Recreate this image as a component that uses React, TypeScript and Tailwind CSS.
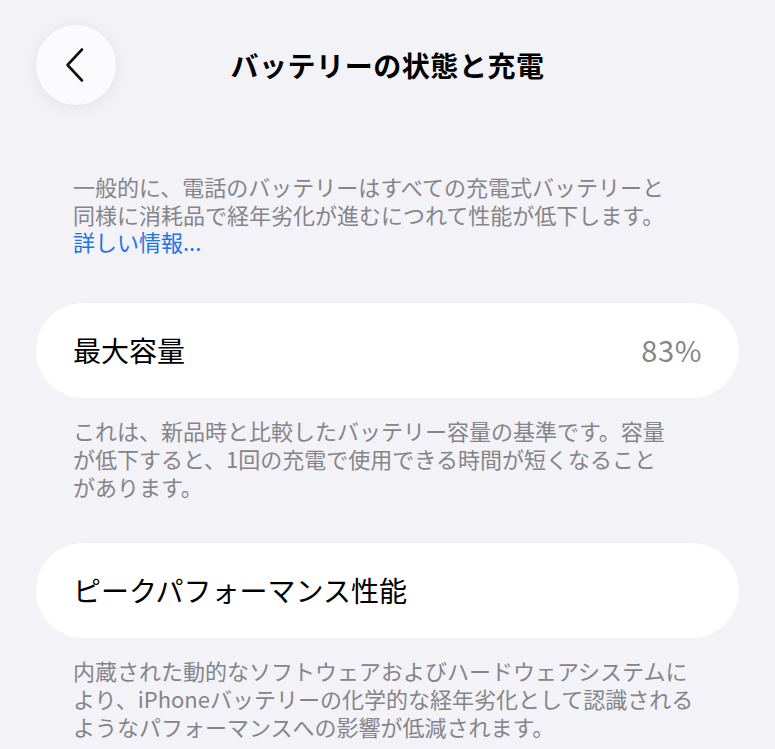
const font = { fontFamily: '"Noto Sans CJK JP", "Noto Sans", sans-serif' };

function Lines({ lines }: { lines: string[] }) {
  return (
    <>
      {lines.map((l, i) => (
        <span key={i} className="block whitespace-nowrap">
          {l}
        </span>
      ))}
    </>
  );
}

export default function App() {
  return (
    <div className="min-h-[749px] w-full bg-[#f2f2f7] px-[36px] pt-[25px]" style={font}>
      <header className="grid grid-cols-[80px_1fr_80px] items-center h-[80px]">
        <button className="w-[80px] h-[80px] rounded-full bg-[#fbfbfd] shadow-[0_2px_18px_rgba(0,0,0,0.07)] flex items-center justify-center">
          <svg width="22" height="36" viewBox="0 0 22 36" fill="none" className="-ml-[2px]">
            <path d="M18 2.5 L3.5 18 L18 33.5" stroke="#111" strokeWidth="2.6" strokeLinecap="round" strokeLinejoin="round" />
          </svg>
        </button>
        <h1 className="text-center text-[28px] font-bold text-black tracking-[0.02em]">
          バッテリーの状態と充電
        </h1>
        <div />
      </header>

      <p className="mt-[68px] px-[37px] text-[22px] leading-[27.5px] text-[#858589]">
        <Lines
          lines={[
            '一般的に、電話のバッテリーはすべての充電式バッテリーと',
            '同様に消耗品で経年劣化が進むにつれて性能が低下します。',
          ]}
        />
        <span className="block text-[#2274e3]">詳しい情報...</span>
      </p>

      <section className="mt-[47px] h-[95px] rounded-full bg-white flex items-center justify-between px-[37px]">
        <span className="text-[28px] text-black">最大容量</span>
        <span className="text-[29px] text-[#86868a] tracking-[0.02em]">83%</span>
      </section>
      <p className="mt-[18px] px-[37px] text-[22px] leading-[28px] text-[#858589]">
        <Lines
          lines={[
            'これは、新品時と比較したバッテリー容量の基準です。容量',
            'が低下すると、1回の充電で使用できる時間が短くなること',
            'があります。',
          ]}
        />
      </p>

      <section className="mt-[43px] h-[95px] rounded-full bg-white flex items-center px-[37px]">
        <span className="text-[28px] text-black">ピークパフォーマンス性能</span>
      </section>
      <p className="mt-[18px] px-[37px] text-[22px] leading-[28px] text-[#858589]">
        <Lines
          lines={[
            '内蔵された動的なソフトウェアおよびハードウェアシステムに',
            'より、iPhoneバッテリーの化学的な経年劣化として認識される',
            'ようなパフォーマンスへの影響が低減されます。',
          ]}
        />
      </p>
    </div>
  );
}
